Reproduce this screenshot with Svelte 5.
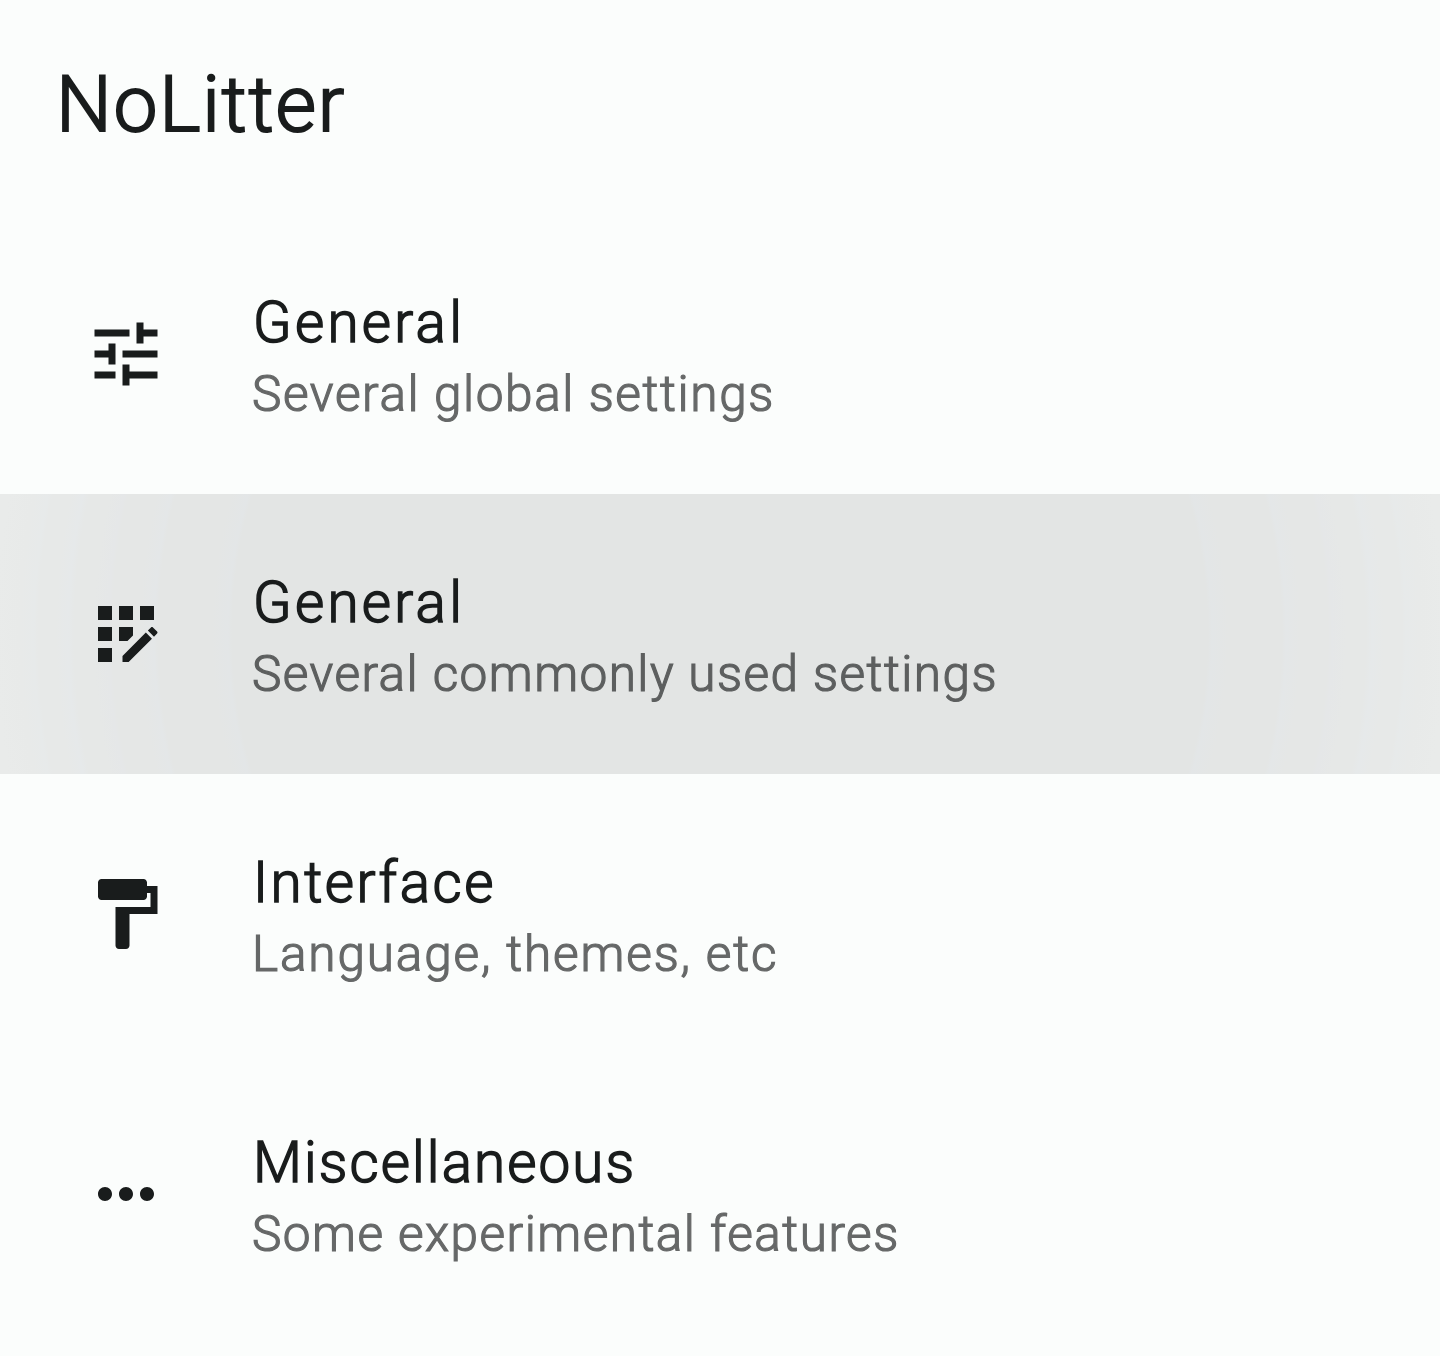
<script>
  // spacing values are in px: [title, summary]
  const items = [
    { icon: 'tune', title: 'General', summary: 'Several global settings', spacing: [3.3, 1.6] },
    { icon: 'apps', title: 'General', summary: 'Several commonly used settings', spacing: [3.3, 1.44], pressed: true },
    { icon: 'paint', title: 'Interface', summary: 'Language, themes, etc', spacing: [2.5, 1.85] },
    { icon: 'more', title: 'Miscellaneous', summary: 'Some experimental features', spacing: [2.1, 1.47] },
  ];

  const paths = {
    tune: 'M3 17v2h6v-2H3zM3 5v2h10V5H3zm10 16v-2h8v-2h-8v-2h-2v6h2zM7 9v2H3v2h4v2h2V9H7zm14 4v-2H11v2h10zm-6-4h2V7h4V5h-4V3h-2v6z',
    apps: 'M10 4h4v4h-4zM4 16h4v4H4zM4 10h4v4H4zM4 4h4v4H4zM14 12.42V10h-4v4h2.42zM20.88 11.29l-1.17-1.17c-.16-.16-.42-.16-.58 0l-.88.88L20 12.75l.88-.88c.16-.16.16-.42 0-.58zM11 18.25V20h1.75l6.67-6.67-1.75-1.75zM16 4h4v4h-4z',
    paint: 'M18 4V3c0-.55-.45-1-1-1H5c-.55 0-1 .45-1 1v4c0 .55.45 1 1 1h12c.55 0 1-.45 1-1V6h1v4H9v11c0 .55.45 1 1 1h2c.55 0 1-.45 1-1v-9h8V4h-3z',
    more: 'M6 10c-1.1 0-2 .9-2 2s.9 2 2 2 2-.9 2-2-.9-2-2-2zm12 0c-1.1 0-2 .9-2 2s.9 2 2 2 2-.9 2-2-.9-2-2-2zm-6 0c-1.1 0-2 .9-2 2s.9 2 2 2 2-.9 2-2-.9-2-2-2z',
  };
</script>

<main class="screen">
  <header class="bar"><h1>NoLitter</h1></header>
  <div class="list">
    {#each items as item}
      <div class="item" class:pressed={item.pressed}>
        <svg class="icon" viewBox="0 0 24 24" aria-hidden="true"><path d={paths[item.icon]} /></svg>
        <div class="text">
          <div class="title" style="letter-spacing:{item.spacing[0]}px">{item.title}</div>
          <div class="summary" style="letter-spacing:{item.spacing[1]}px">{item.summary}</div>
        </div>
      </div>
    {/each}
  </div>
</main>

<style>
  :global(body) { background: #fbfdfc; }
  .screen {
    height: 1356px;
    overflow: hidden;
    box-sizing: border-box;
    background: #fbfdfc;
    color: #191c1c;
    font-family: Roboto, 'Noto Sans', sans-serif;
    font-weight: 300;
    white-space: nowrap;
    -webkit-text-stroke: 1.5px currentColor;
  }
  .bar { height: 214px; padding: 56px 0 0 56px; box-sizing: border-box; }
  h1 { margin: 0; font-size: 78.5px; line-height: 96px; font-weight: 300; letter-spacing: 1.7px; -webkit-text-stroke-width: 2px; }
  .item { display: flex; align-items: center; height: 280px; padding-left: 84px; box-sizing: border-box; }
  /* touch ripple that fades in faint bands towards both edges */
  .pressed {
    background: radial-gradient(circle at 50% 50%,
      #e3e5e4 0, #e3e5e4 488px, #e3e6e7 492px, #e4e6e5 508px, #e4e6e5 562px, #e4e7e8 566px,
      #e5e7e6 580px, #e5e7e6 608px, #e5e7e8 612px, #e6e8e7 626px, #e6e8e7 646px, #e6e9ea 652px,
      #e7e9e8 664px, #e7e9e8 682px, #e7eaea 686px, #e8eae9 700px, #e9ebea 725px);
  }
  .icon { width: 84px; height: 84px; flex: none; fill: #191c1c; stroke: none; }
  .text { margin-left: 84px; padding-top: 4px; }
  .title { padding-left: 1px; font-size: 56.5px; line-height: 75px; }
  .summary { font-size: 49.5px; line-height: 66px; color: #666868; -webkit-text-stroke: 1.2px currentColor; }
  .pressed .summary { color: #5d5f5f; }
</style>
